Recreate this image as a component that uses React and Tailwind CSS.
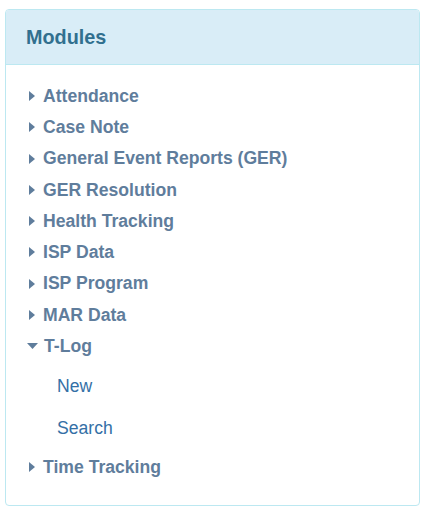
import React from 'react';

const modules = [
  'Attendance',
  'Case Note',
  'General Event Reports (GER)',
  'GER Resolution',
  'Health Tracking',
  'ISP Data',
  'ISP Program',
  'MAR Data',
];

const Caret = ({ open }) =>
  open ? (
    <svg width="11" height="6" viewBox="0 0 11 6" className="mr-[6px] ml-[1px]">
      <path d="M0 0 L11 0 L5.5 6 Z" fill="#5f7d9c" />
    </svg>
  ) : (
    <svg width="6" height="10" viewBox="0 0 6 10" className="mr-[8px] ml-[3px]">
      <path d="M0 0 L6 5 L0 10 Z" fill="#5f7d9c" />
    </svg>
  );

const Item = ({ label, open }) => (
  <div className="flex items-center h-[31.25px] font-bold text-[#5f7d9c]">
    <Caret open={open} />
    <span>{label}</span>
  </div>
);

export default function App() {
  return (
    <div className="bg-white min-h-screen pt-[9px] px-[5px]" style={{ fontFamily: '"Liberation Sans", Arial, sans-serif' }}>
      <div className="border border-[#bce8f1] rounded-[4px] overflow-hidden h-[497px]">
        <div className="bg-[#d9edf7] border-b border-[#bce8f1] h-[55px] flex items-center px-[20px] pt-[2px]">
          <h3 className="text-[19.8px] font-bold text-[#31708f]">Modules</h3>
        </div>
        <div className="pt-[15.5px] pl-[20px] text-[17.6px]">
          {modules.map((m) => (
            <Item key={m} label={m} />
          ))}
          <Item label="T-Log" open />
          <div className="py-[3px] pl-[31px] text-[#3470a6]">
            <div className="h-[42px] flex items-center">New</div>
            <div className="h-[42px] flex items-center">Search</div>
          </div>
          <Item label="Time Tracking" />
        </div>
      </div>
    </div>
  );
}
